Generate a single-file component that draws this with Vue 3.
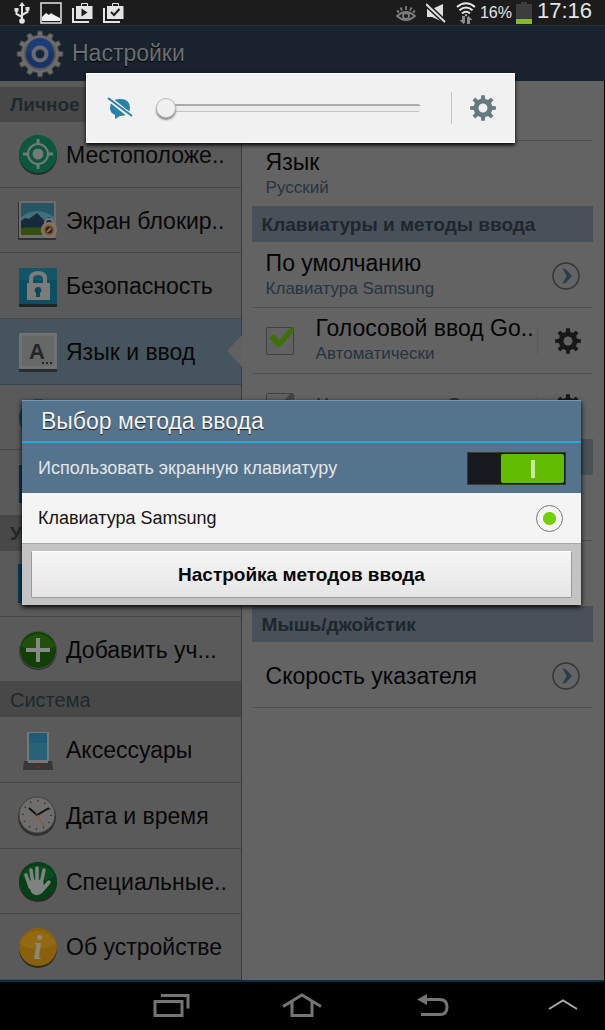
<template>
  <div class="screen">
    <header class="status-bar">
      <div class="status-left">
        <svg width="16" height="22" viewBox="0 0 16 22" fill="none" stroke="#e4e4e4" stroke-width="2">
          <path d="M8 3v16M8 15L2.500 12V8M8 13l5.500-3V7" />
          <path d="M8 0l3 4H5zM.5 6h4v3.500h-4zM11.500 5h4v3.500h-4z" fill="#e4e4e4" stroke="none" />
          <circle cx="8" cy="19" r="2.800" fill="#e4e4e4" stroke="none" />
        </svg>
        <svg width="22" height="22" viewBox="0 0 22 22">
          <path d="M1 1h20v20H1z" fill="none" stroke="#e4e4e4" stroke-width="1.500" />
          <path d="M2 19v-4l4-4 3 2 2-2 3 2 2 1 4 2v3z" fill="#f2f2f2" />
        </svg>
        <svg v-for="mark in bagMarks" :key="mark.d" width="21" height="21" viewBox="0 0 21 21">
          <path d="M1 6v14h16" fill="none" stroke="#e4e4e4" stroke-width="2" />
          <path d="M4 4h5V2q0-1 1-1h5q1 0 1 1v2h4.500v13H4zM10 2v2h5V2z" fill="#e4e4e4" fill-rule="evenodd" />
          <path :d="mark.d" :fill="mark.fill" :stroke="mark.stroke" stroke-width="2" />
        </svg>
      </div>
      <div class="status-right">
        <svg class="eye" width="20" height="16" viewBox="0 0 20 16" fill="none" stroke="#7c7c7c" stroke-width="1.800">
          <path d="M1 11q9-8 18 0-9 8-18 0zM10 1v4M4.500 2.500l1.500 3M15.500 2.500l-1.500 3M1 5.500l2 2M19 5.500l-2 2" />
          <circle cx="10" cy="11" r="3" />
        </svg>
        <svg class="mute" width="20" height="20" viewBox="0 0 20 20">
          <path d="M1 6h5L17 1v18L6 14H1z" fill="#dedede" />
          <path d="M0 1l19 18" stroke="#1c1c1c" stroke-width="5" />
          <path d="M0 1l19 18" stroke="#dedede" stroke-width="2" />
        </svg>
        <svg class="wifi" width="20" height="22" viewBox="0 0 20 22" fill="none">
          <path d="M1 5q9-7.500 18 0M3.500 8.300q6.500-5.500 13 0M6 11.500q4-3.500 8 0" stroke="#e8e8e8" stroke-width="2" />
          <path d="M8.500 12.500h3L10 14.500z" fill="#e8e8e8" />
          <path d="M6 14v4H3.500L7.500 22l1.500-1.500V14zM14 22v-4h2.500L12.500 14 11 15.500V22z" fill="#8c8c8c" />
        </svg>
        <span class="percent">16%</span>
        <svg class="battery" width="16" height="22" viewBox="0 0 16 22">
          <path d="M0 2h5V0h6v2h5v20H0z" fill="#3d3d3d" />
          <path d="M0 17h16v5H0z" fill="#86bd16" />
        </svg>
        <time class="clock">17:16</time>
      </div>
    </header>

    <div class="app-bar">
      <svg width="48" height="48" viewBox="-24 -24 48 48">
        <path :d="gear(12, 23, 19)" fill="#6c6c6c" stroke="#444" />
        <circle r="15" fill="#17336b" stroke="#555" stroke-width="2" />
        <path d="M-13-3A13 13 0 0 1 13-3Q0 3-13-3z" fill="#1d3d7a" />
        <circle r="6.500" fill="#15264b" stroke="#6c6c6c" stroke-width="4" />
      </svg>
      <h1>Настройки</h1>
    </div>

    <main class="panes">
      <nav class="sidebar">
        <template v-for="group in groups" :key="group.title">
          <h2 class="side-title" :class="{ strong: group.strong }">{{ group.title }}</h2>
          <a
            v-for="item in group.items"
            :key="item.icon"
            href="#"
            class="side-row"
            :class="{ active: item.icon === 'keyboard' }"
            @click.prevent
          >
            <svg width="40" height="40" viewBox="0 0 40 40">
              <g v-if="item.icon === 'location'">
                <circle cx="20" cy="21" r="19" fill="#262d2a" />
                <circle cx="20" cy="19" r="19" fill="#0c573d" />
                <g fill="none" stroke="#747a77" stroke-width="2">
                  <circle cx="20" cy="19" r="10" />
                  <path d="M20 4v6M20 28v6M5 19h6M29 19h6" stroke-width="3" />
                </g>
                <circle cx="20" cy="19" r="5.500" fill="#747a77" />
              </g>
              <g v-else-if="item.icon === 'lock-screen'">
                <path d="M0 1h38v38H0z" fill="#303030" />
                <path d="M1 0h37v37H1z" fill="#6d6d6d" />
                <path d="M3 2h33v32H3z" fill="#265663" />
                <path d="M3 16q16-12 33 0v8H3z" fill="#41707b" />
                <path d="M3 27V20l4-3 4 1 8-6 7 7 5-3 5 4v10H3z" fill="#172a3b" />
                <path d="M3 27q16-2 33 1v6H3z" fill="#354f10" />
                <path d="M27 25v-3q0-4 4-4t4 4v3" fill="none" stroke="#777" stroke-width="2" />
                <circle cx="31" cy="29" r="8" fill="#777" />
                <circle cx="31" cy="29" r="4.500" fill="#222" stroke="#965818" stroke-width="2" />
                <path d="M29 31l4-4" stroke="#777" stroke-width="2" />
              </g>
              <g v-else-if="item.icon === 'security'">
                <path d="M1 2h38v38H1z" fill="#1d2426" />
                <path d="M1 1h38v36H1z" fill="#0e4e62" />
                <path d="M1 1h38v12H1z" fill="#125767" />
                <path d="M13 17v-5q0-6 7-6t7 6v5" fill="none" stroke="#7b7b7b" stroke-width="4" />
                <path d="M9 16h23v17H9z" fill="#7b7b7b" />
                <path d="M20 20a3.300 3.300 0 0 1 2 6v4h-4v-4a3.300 3.300 0 0 1 2-6z" fill="#0e4659" />
              </g>
              <g v-else-if="item.icon === 'keyboard'">
                <path d="M1 2h38v38H1z" fill="#272c2f" />
                <path d="M1 1h38v36H1z" fill="#707172" />
                <path d="M4 4h32v30H4z" fill="#666767" />
                <text x="19" y="27" class="key-letter">A</text>
                <path d="M24 31h2M28 31h2M32 31h2" stroke="#262626" stroke-width="2" />
              </g>
              <g v-else-if="item.icon === 'cloud'">
                <circle cx="20" cy="20" r="19" fill="#0f4354" />
              </g>
              <g v-else-if="item.icon === 'backup'">
                <path d="M1 1h38v38H1z" fill="#182f55" />
              </g>
              <g v-else-if="item.icon === 'account'">
                <path d="M0 0h39v39H0z" fill="#0b3b58" />
              </g>
              <g v-else-if="item.icon === 'add'">
                <circle cx="20" cy="21" r="19" fill="#2c2c2c" />
                <circle cx="20" cy="20" r="18.500" fill="#123f08" stroke="#494f47" />
                <path d="M3 16A18 18 0 0 1 37 16Q20 26 3 16z" fill="#20500e" />
                <path d="M20 8v24M8 20h24" stroke="#888" stroke-width="4" />
              </g>
              <g v-else-if="item.icon === 'accessories'">
                <path d="M9 1h22v32H9z" fill="#777" />
                <path d="M11 2h18v27H11z" fill="#276279" />
                <path d="M11 2h18v10H11z" fill="#205a79" />
                <path d="M6 30h4v2h20v-2h4l1 9H5z" fill="#373737" />
                <path d="M18 36h4" stroke="#8e2020" stroke-width="2" />
              </g>
              <g v-else-if="item.icon === 'clock'">
                <circle cx="19" cy="21" r="19" fill="#303030" />
                <circle cx="19" cy="19" r="18" fill="#6f6e6c" stroke="#3f3f3f" />
                <circle cx="19" cy="19" r="14" fill="none" stroke="#303030" stroke-width="2" stroke-dasharray="1 6.330" />
                <path d="M11 12l8 7 12-7" fill="none" stroke="#111" stroke-width="2" />
                <path d="M18 17l8 13" stroke="#9b4b2b" />
              </g>
              <g v-else-if="item.icon === 'hand'">
                <circle cx="20" cy="21" r="19" fill="#252b26" />
                <circle cx="20" cy="19" r="19" fill="#073f18" />
                <path d="M3 14A19 19 0 0 1 37 14Q20 25 3 14z" fill="#0a4d1e" />
                <path
                  d="M12 25L8 13M15 22L13 8M19 21V6M23 22l3-14M25 27l6-7"
                  fill="none"
                  stroke="#808380"
                  stroke-width="3.500"
                  stroke-linecap="round"
                />
                <path d="M10 19q8-3 15 0l1 5 5-4q2 1 0 3l-7 8q-7 5-11-1z" fill="#808380" />
              </g>
              <g v-else>
                <circle cx="20" cy="21" r="19" fill="#302c22" />
                <circle cx="20" cy="19" r="19" fill="#89600e" />
                <path d="M2 16A19 19 0 0 1 38 16Q20 26 2 16z" fill="#926a12" />
                <text x="20" y="31" class="info-letter">i</text>
              </g>
            </svg>
            <span>{{ item.label }}</span>
          </a>
        </template>
      </nav>

      <section class="details">
        <div class="row spacer"></div>
        <div class="row">
          <div class="row-text">
            <div class="row-title">Язык</div>
            <div class="row-sub">Русский</div>
          </div>
        </div>
        <h2 class="detail-title">Клавиатуры и методы ввода</h2>
        <div class="row">
          <div class="row-text">
            <div class="row-title">По умолчанию</div>
            <div class="row-sub">Клавиатура Samsung</div>
          </div>
          <button class="icon-btn" aria-label="Открыть">
            <svg width="28" height="28" viewBox="0 0 28 28">
              <circle cx="14" cy="14" r="13" fill="none" stroke="#363636" stroke-width="1.500" />
              <path d="M10.500 6l3.500 1.500 6 6.500-6 6.500-3.500 1.500 4-8z" fill="#2c3c4d" />
            </svg>
          </button>
        </div>
        <div v-for="m in methods" :key="m.title" class="row method" :class="{ disabled: m.disabled }">
          <label class="check">
            <input type="checkbox" checked :disabled="m.disabled" :aria-label="m.title" />
            <svg width="30" height="28" viewBox="0 0 30 28">
              <path d="M3 12l5-4 5 6L25 1l4 3-15 17h-3z" class="tick" />
            </svg>
          </label>
          <div class="row-text">
            <div class="row-title">{{ m.title }}</div>
            <div v-if="m.sub" class="row-sub">{{ m.sub }}</div>
          </div>
          <button class="icon-btn gear-btn" aria-label="Параметры">
            <svg width="28" height="28" viewBox="-14 -14 28 28">
              <path :d="gear(8, 13, 9.500) + hole(4.500)" fill="#181818" fill-rule="evenodd" />
            </svg>
          </button>
        </div>
        <h2 class="detail-title"></h2>
        <div class="row"></div>
        <div class="row"></div>
        <h2 class="detail-title">Мышь/джойстик</h2>
        <div class="row">
          <div class="row-text">
            <div class="row-title">Скорость указателя</div>
          </div>
          <button class="icon-btn" aria-label="Открыть">
            <svg width="28" height="28" viewBox="0 0 28 28">
              <circle cx="14" cy="14" r="13" fill="none" stroke="#363636" stroke-width="1.500" />
              <path d="M10.500 6l3.500 1.500 6 6.500-6 6.500-3.500 1.500 4-8z" fill="#2c3c4d" />
            </svg>
          </button>
        </div>
      </section>
    </main>

    <footer class="nav-bar">
      <button class="icon-btn" aria-label="Недавние">
        <svg width="40" height="26" viewBox="0 0 40 26" fill="none" stroke="#747474" stroke-width="3">
          <path d="M4 8.500h27v14H4zM10 2.500h27v13" />
        </svg>
      </button>
      <button class="icon-btn" aria-label="Домой">
        <svg width="40" height="26" viewBox="0 0 40 26" fill="none" stroke="#747474" stroke-width="3">
          <path d="M1 13.500L20 2l19 11.500M10 8v14.500h20V8" />
        </svg>
      </button>
      <button class="icon-btn" aria-label="Назад">
        <svg width="40" height="26" viewBox="0 0 40 26" fill="none" stroke="#747474" stroke-width="3">
          <path d="M10 6.500h17q7 0 7 7.500t-7 7.500H8" />
          <path d="M4 6.500L14 1v11z" fill="#747474" stroke="none" />
        </svg>
      </button>
      <button class="icon-btn" aria-label="Развернуть">
        <svg width="40" height="26" viewBox="0 0 40 26" fill="none" stroke="#a8a8a8" stroke-width="2">
          <path d="M5 16L19 7.500 33 16" />
        </svg>
      </button>
    </footer>

    <div class="volume">
      <svg width="26" height="22" viewBox="0 0 26 22">
        <path d="M3 11Q3 2 13 2q10 0 10 9 0 8-10 8l-5 3v-4q-5-2-5-7z" fill="#2b80a6" />
        <path d="M0 0l25 20" stroke="#f1f1f1" stroke-width="5" />
        <path d="M1 1l24 18" stroke="#2b80a6" stroke-width="2" />
      </svg>
      <input v-model="volume" type="range" min="0" max="15" aria-label="Громкость" />
      <button class="icon-btn" aria-label="Настройки звука">
        <svg width="28" height="28" viewBox="-14 -14 28 28">
          <path :d="gear(8, 13, 9.500) + hole(4.500)" fill="#66797f" fill-rule="evenodd" />
        </svg>
      </button>
    </div>

    <div class="dialog" role="dialog" aria-labelledby="dialog-title">
      <h2 id="dialog-title" class="dialog-title">Выбор метода ввода</h2>
      <label class="dialog-row hardware">
        <span>Использовать экранную клавиатуру</span>
        <input v-model="onScreen" class="switch" type="checkbox" />
      </label>
      <label class="dialog-row">
        <span>Клавиатура Samsung</span>
        <input v-model="method" class="radio" type="radio" name="method" value="samsung" />
      </label>
      <div class="dialog-footer">
        <button class="dialog-btn">Настройка методов ввода</button>
      </div>
    </div>
  </div>
</template>

<script setup>
import { ref } from 'vue'

const volume = ref(0)
const onScreen = ref(true)
const method = ref('samsung')

const bagMarks = [
  { d: 'M9.500 6.500v8l6-4z', fill: '#1c1c1c', stroke: 'none' },
  { d: 'M8 10l3 3 5.500-6', fill: 'none', stroke: '#1c1c1c' }
]

const groups = [
  {
    title: 'Личное',
    strong: true,
    items: [
      { icon: 'location', label: 'Местоположе..' },
      { icon: 'lock-screen', label: 'Экран блокир..' },
      { icon: 'security', label: 'Безопасность' },
      { icon: 'keyboard', label: 'Язык и ввод' },
      { icon: 'cloud', label: '' },
      { icon: 'backup', label: '' }
    ]
  },
  {
    title: 'Учетные записи',
    strong: true,
    items: [
      { icon: 'account', label: '' },
      { icon: 'add', label: 'Добавить уч...' }
    ]
  },
  {
    title: 'Система',
    items: [
      { icon: 'accessories', label: 'Аксессуары' },
      { icon: 'clock', label: 'Дата и время' },
      { icon: 'hand', label: 'Специальные..' },
      { icon: 'info', label: 'Об устройстве' }
    ]
  }
]

const methods = [
  { title: 'Голосовой ввод Go..', sub: 'Автоматически' },
  { title: 'Клавиатура Sa..', disabled: true }
]

// outline of a gear centred on 0,0
function gear(teeth, outer, inner) {
  const step = (Math.PI * 2) / teeth
  const pts = []
  for (let i = 0; i < teeth; i++) {
    const a = i * step
    for (const [r, da] of [[inner, -0.28], [outer, -0.18], [outer, 0.18], [inner, 0.28]]) {
      pts.push((r * Math.cos(a + da * step)).toFixed(2) + ' ' + (r * Math.sin(a + da * step)).toFixed(2))
    }
  }
  return 'M' + pts.join('L') + 'z'
}

function hole(r) {
  return `M${-r} 0a${r} ${r} 0 1 0 ${2 * r} 0a${r} ${r} 0 1 0 ${-2 * r} 0z`
}
</script>

<style>
body { margin: 0; background: #000; }
</style>

<style scoped>
.screen {
  position: relative; display: flex; flex-direction: column; min-height: 100vh;
  font-family: "Liberation Sans", Arial, sans-serif; background: #000;
}
h1, h2 { margin: 0; font-weight: 400; }
svg { display: block; flex: none; }
.icon-btn { padding: 0; border: 0; background: none; cursor: pointer; flex: none; }

.status-bar { display: flex; justify-content: space-between; height: 25px; background: #1c1c1c; color: #e4e4e4; }
.status-left { display: flex; align-items: center; gap: 10px; padding-left: 14px; }
.status-right { display: flex; align-items: center; padding-right: 13px; }
.eye { margin-right: 10px; }
.wifi { margin: 0 4px 0 10px; }
.percent { font-size: 16px; }
.battery { margin: 0 5px 0 4px; }
.clock { padding-bottom: 4px; font-size: 22px; line-height: 22px; }

.app-bar {
  display: flex; align-items: center; gap: 8px; height: 55px; padding-left: 16px;
  border-top: 1px solid #25323c; background: #18232d;
}
.app-bar h1 { font-size: 23px; color: #6d6f71; text-shadow: 0 1px 1px #000; }

.panes { display: flex; flex: 1; margin-right: 1px; border-bottom: 2px solid #06303f; background: #636363; }

.sidebar {
  display: flex; flex-direction: column; width: 40%; flex: none; padding-top: 6px; box-sizing: border-box;
  background: #5a5a5a; border-right: 1px solid #3c3c3c;
}
.side-title {
  flex: none; height: 35px; padding-left: 10px; font-size: 20px; line-height: 36px;
  white-space: nowrap; overflow: hidden; color: #20282c; background: #484848;
}
.side-title.strong { font-size: 19px; font-weight: 700; }
.side-row {
  position: relative; display: flex; align-items: center; flex: 1 0 65px; gap: 8px; padding: 2px 0 0 18px; box-sizing: border-box;
  border-bottom: 1px solid #484848; font-size: 23px; white-space: nowrap; color: #080808; text-decoration: none;
}
.side-row.active { background: #46545d; border-bottom-color: #38444c; }
.side-row.active::after {
  content: ""; position: absolute; right: -1px; top: 50%; margin-top: -16px;
  border: 16px solid transparent; border-left: 0; border-right: 15px solid #616161;
}
.key-letter { font: 700 22px "Liberation Sans", Arial, sans-serif; text-anchor: middle; fill: #262626; }
.info-letter { font: italic 700 34px "Liberation Serif", serif; text-anchor: middle; fill: #8d8775; }

.details { flex: 1; min-width: 0; padding: 0 11px 0 10px; }
.row {
  display: flex; align-items: center; height: 66px; padding: 2px 13px 0 14px; box-sizing: border-box;
  border-bottom: 1px solid #505050;
}
.row.spacer { height: 60px; border-bottom-color: #4b5359; }
.row.method { padding-top: 0; }
.row-text { flex: 1; min-width: 0; white-space: nowrap; }
.row-title { font-size: 23px; line-height: 26px; color: #050505; }
.row-sub { font-size: 17px; line-height: 26px; color: #28333f; }
.disabled .row-title { color: #303030; }
.detail-title {
  height: 35px; padding-left: 10px; font-size: 19px; font-weight: 700; line-height: 35px;
  color: #1d272d; background: #485058;
}
.check { position: relative; width: 28px; height: 28px; margin-right: 22px; flex: none; }
.check input {
  appearance: none; display: block; width: 28px; height: 28px; margin: 0;
  border: 1px solid #404040; border-radius: 2px; background: #626262;
}
.check svg { position: absolute; left: 0; top: -1px; pointer-events: none; }
.tick { fill: #3d6f0b; }
.disabled .tick { fill: #444; }
.gear-btn { padding-left: 16px; margin-right: -2px; border-left: 1px solid #5a5a5a; }

.nav-bar { display: flex; align-items: center; justify-content: space-between; height: 48px; padding: 0 21px 0 151px; background: #000; }

.volume {
  position: absolute; left: 86px; right: 90px; top: 73px; display: flex; align-items: center; height: 70px;
  padding: 0 17px 0 20px; box-sizing: border-box; border: 1px solid #fff; background: #f1f1f1; box-shadow: 0 2px 4px #000;
}
.volume input {
  appearance: none; flex: 1; min-width: 0; height: 24px; margin: 0 30px 0 23px; background: transparent;
}
.volume input::-webkit-slider-runnable-track {
  height: 8px; border-radius: 4px;
  background: linear-gradient(#aaa 2px, #ececec 2px, #ececec 7px, #c4c4c4 7px) 10px 0 no-repeat;
}
.volume input::-webkit-slider-thumb {
  appearance: none; box-sizing: border-box; width: 20px; height: 20px; margin-top: -6px; border: 1px solid #bbb; border-radius: 50%;
  background: #f0f0f0; box-shadow: 0 2px 2px #888;
}
.volume .icon-btn { padding: 2px 0 2px 17px; border-left: 1px solid #c4c4c4; }

.dialog {
  position: absolute; left: 22px; right: 24px; top: 400px; background: #c3c3c3; box-shadow: 0 2px 5px #000;
}
.dialog-title {
  height: 43px; padding-left: 19px; box-sizing: border-box; border-top: 1px solid #7396b0; border-bottom: 2px solid #2ba5d6;
  font-size: 23px; line-height: 40px; color: #f4f4f4; background: #54738d; text-shadow: 0 1px 1px #222;
}
.dialog-row {
  display: flex; align-items: center; justify-content: space-between; height: 50px; padding: 0 18px 0 16px;
  font-size: 18px; color: #151515; background: #f4f4f4;
}
.dialog-row.hardware { padding-right: 15px; color: #e2e6e9; background: #54738d; }
.switch {
  appearance: none; width: 99px; height: 33px; margin: 0; padding: 1px; border: 1px solid #3e3a33; background: #171a1f;
}
.switch::before {
  content: ""; display: block; width: 63px; height: 29px; margin-left: auto; border-radius: 2px;
  background: linear-gradient(90deg, transparent 30px, #c5eb9b 30px, #c5eb9b 34px, transparent 34px) 0 6px / 100% 18px no-repeat, #62bd02;
}
.radio {
  appearance: none; width: 27px; height: 27px; margin: 0; border: 1px solid #777; border-radius: 50%;
  background: radial-gradient(circle, #74cf05 6px, #f4f4f4 7px);
}
.dialog-footer { padding: 7px 9px; border-top: 1px solid #a8a8a8; }
.dialog-btn {
  display: block; width: 100%; height: 47px; border: 1px solid #999; border-top-color: #fff; border-radius: 2px;
  font: 700 19px "Liberation Sans", Arial, sans-serif; color: #050505; background: linear-gradient(#f5f5f5, #e5e5e5);
}
</style>
